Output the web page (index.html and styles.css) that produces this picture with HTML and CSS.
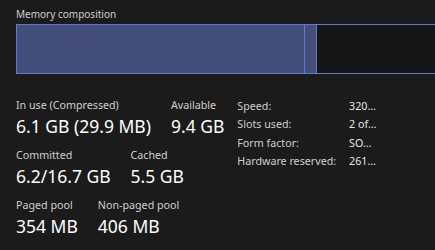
FILE: index.html
```html
<!DOCTYPE html>
<html>
<head>
<meta charset="utf-8">
<link rel="stylesheet" href="styles.css">
</head>
<body>
<div class="page">
  <div class="title">Memory composition</div>
  <div class="bar">
    <div class="seg inuse"></div>
    <div class="seg modified"></div>
    <div class="free"></div>
  </div>
  <div class="stats">
    <div class="left">
      <div class="row">
        <div class="stat"><div class="label">In use (Compressed)</div><div class="value">6.1 GB (29.9 MB)</div></div>
        <div class="stat"><div class="label">Available</div><div class="value">9.4 GB</div></div>
      </div>
      <div class="row">
        <div class="stat"><div class="label">Committed</div><div class="value">6.2/16.7 GB</div></div>
        <div class="stat"><div class="label">Cached</div><div class="value">5.5 GB</div></div>
      </div>
      <div class="row">
        <div class="stat"><div class="label">Paged pool</div><div class="value">354 MB</div></div>
        <div class="stat"><div class="label">Non-paged pool</div><div class="value">406 MB</div></div>
      </div>
    </div>
    <div class="details">
      <div class="dlabel">Speed:</div><div class="dvalue">320…</div>
      <div class="dlabel">Slots used:</div><div class="dvalue">2 of…</div>
      <div class="dlabel">Form factor:</div><div class="dvalue">SO…</div>
      <div class="dlabel">Hardware reserved:</div><div class="dvalue">261…</div>
    </div>
  </div>
</div>
</body>
</html>
```
FILE: styles.css
```css
html, body {
  margin: 0;
  padding: 0;
  overflow: hidden;
  background: #1b1b1b;
}
.page {
  width: 435px;
  height: 250px;
  padding: 6px 0 0 16px;
  box-sizing: border-box;
  overflow: hidden;
  font-family: "Noto Sans", "Open Sans", sans-serif;
  color: #ffffff;
}
.title {
  font-size: 10px;
  line-height: 16px;
  height: 18px;
  color: #cfcfcf;
}
.bar {
  display: flex;
  width: calc(100% + 4px);
  height: 50px;
  box-sizing: border-box;
  border: 1px solid #6577cf;
  background: #151515;
}
.seg {
  height: 100%;
  background: #434e7b;
  border-right: 1px solid #6577cf;
}
.inuse { width: 287px; }
.modified { width: 11px; }
.free { flex: 1; }
.stats {
  display: flex;
  gap: 13px;
  margin-top: 22px;
}
.left {
  display: flex;
  flex-direction: column;
  gap: 8px;
}
.row {
  display: flex;
  gap: 20px;
}
.label {
  font-size: 10.7px;
  line-height: 18px;
  color: #cfcfcf;
}
.value {
  font-size: 17.5px;
  line-height: 24px;
  color: #ffffff;
}
.details {
  display: grid;
  grid-template-columns: auto auto;
  justify-content: start;
  column-gap: 13px;
  font-size: 10.7px;
  line-height: 18.4px;
  color: #cfcfcf;
  align-self: flex-start;
  margin-top: 1px;
}
.dvalue {
  white-space: nowrap;
  color: #e6e6e6;
}
```
